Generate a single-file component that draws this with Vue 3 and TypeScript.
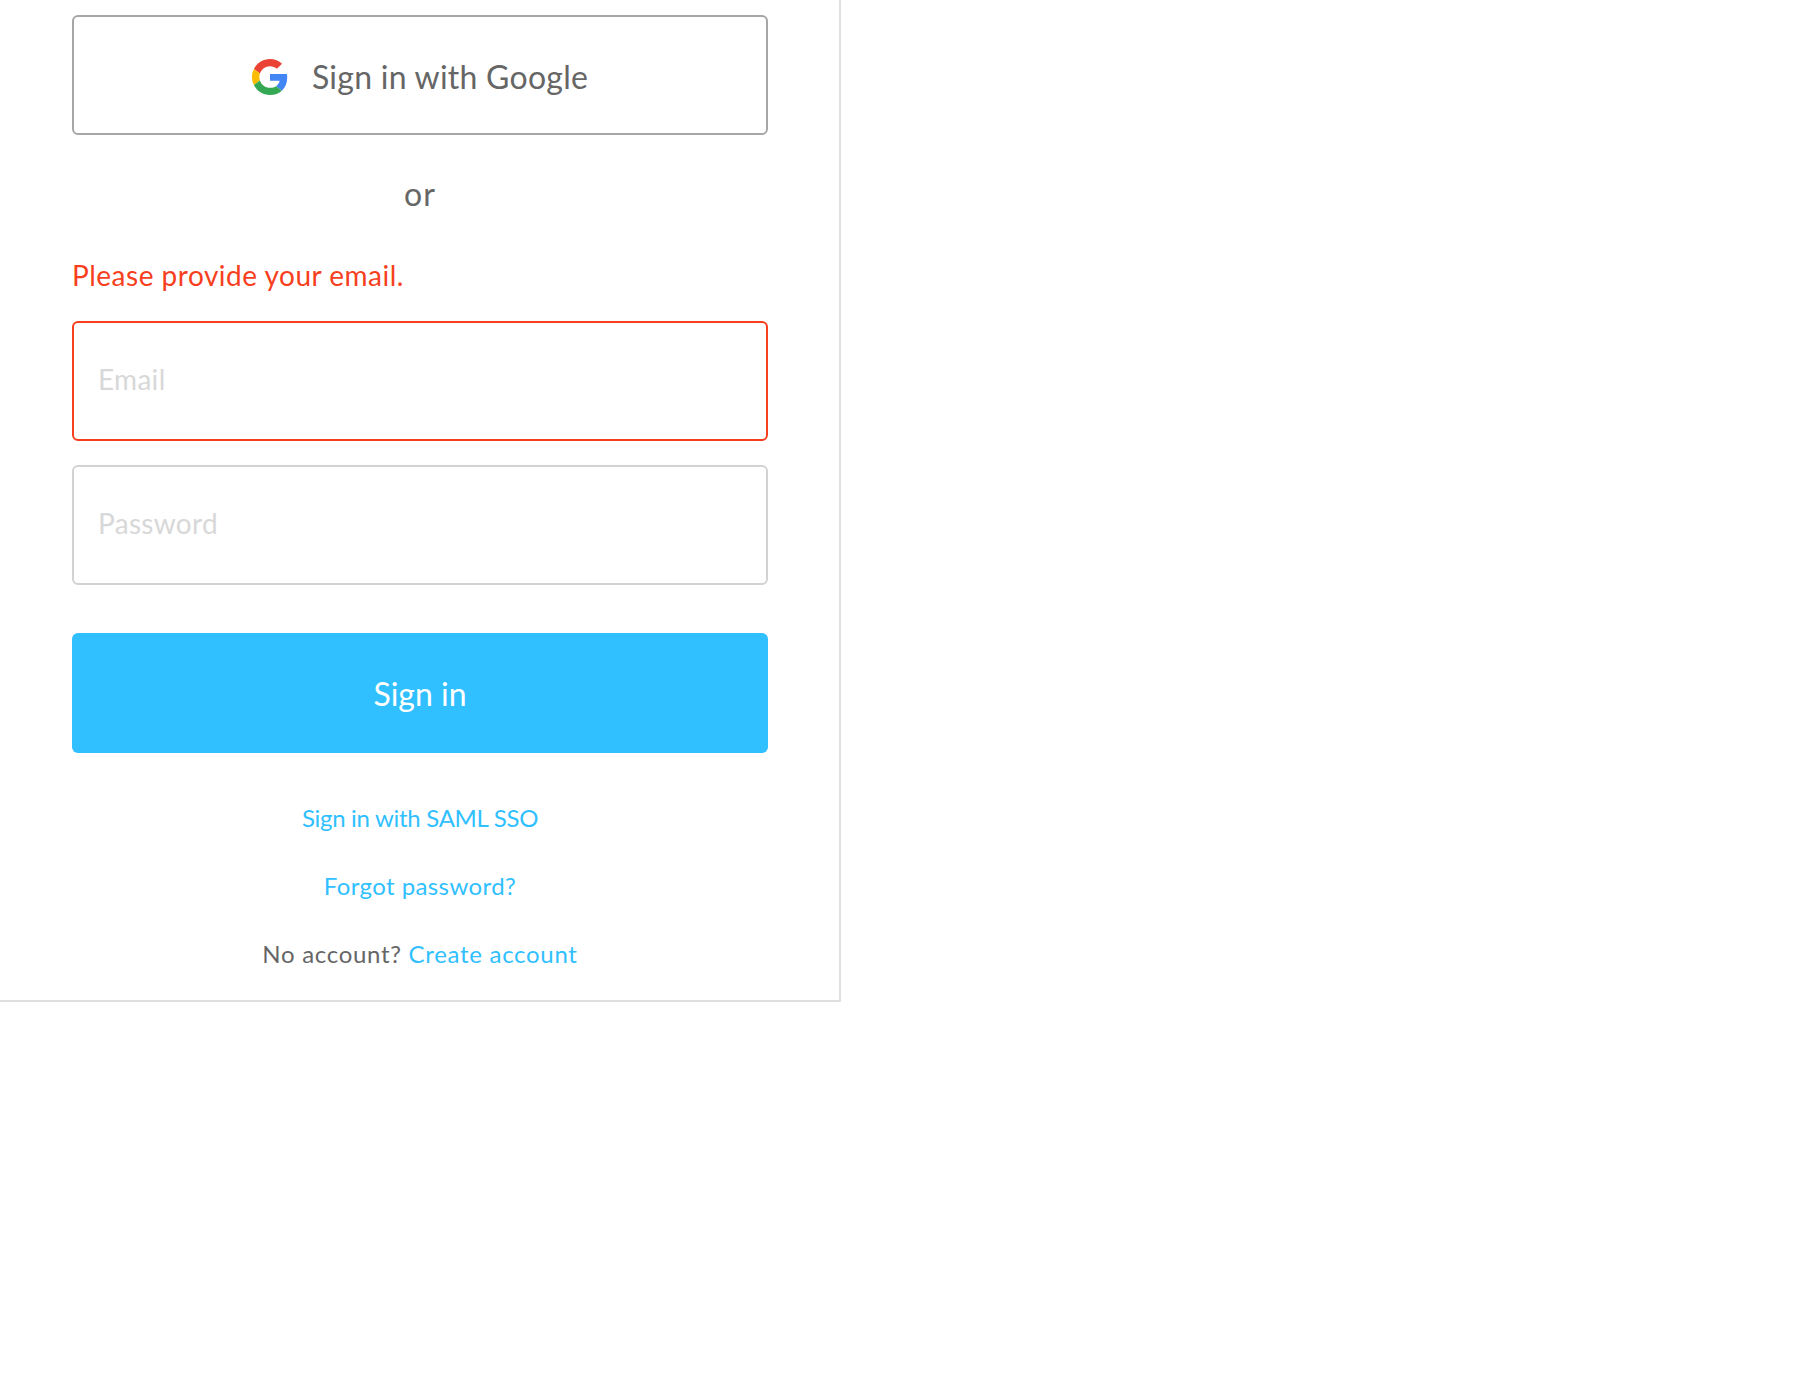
<script setup lang="ts">
const title: string = 'Sign in with Google'
</script>

<template>
  <main class="panel">
    <form class="form" @submit.prevent>
      <button type="button" class="google">
        <svg class="g" viewBox="0 0 48 48" width="36" height="36" aria-hidden="true">
          <path fill="#EA4335" d="M24 9.5c3.54 0 6.71 1.22 9.21 3.6l6.85-6.85C35.9 2.38 30.47 0 24 0 14.62 0 6.51 5.38 2.56 13.22l7.98 6.19C12.43 13.72 17.74 9.5 24 9.5z"/>
          <path fill="#4285F4" d="M46.98 24.55c0-1.57-.15-3.09-.38-4.55H24v9.02h12.94c-.58 2.96-2.26 5.48-4.78 7.18l7.73 6c4.51-4.18 7.09-10.36 7.09-17.65z"/>
          <path fill="#FBBC05" d="M10.53 28.59c-.48-1.45-.76-2.99-.76-4.59s.27-3.14.76-4.59l-7.98-6.19C.92 16.46 0 20.12 0 24c0 3.88.92 7.54 2.56 10.78l7.97-6.19z"/>
          <path fill="#34A853" d="M24 48c6.48 0 11.93-2.13 15.89-5.81l-7.73-6c-2.15 1.45-4.92 2.3-8.16 2.3-6.26 0-11.57-4.22-13.47-9.91l-7.98 6.19C6.51 42.62 14.62 48 24 48z"/>
        </svg>
        <span>{{ title }}</span>
      </button>
      <p class="or">or</p>
      <p class="error">Please provide your email.</p>
      <input class="field invalid" type="email" placeholder="Email" />
      <input class="field" type="password" placeholder="Password" />
      <button type="submit" class="submit">Sign in</button>
      <a class="link row first" href="#">Sign in with SAML SSO</a>
      <a class="link row forgot" href="#">Forgot password?</a>
      <p class="row account">No account? <a class="link" href="#">Create account</a></p>
    </form>
  </main>
</template>

<style>
html, body { background: #fff; }
</style>

<style scoped>
.panel {
  box-sizing: border-box;
  width: 841px;
  height: 1002px;
  padding: 15px 72px 0;
  border-right: 2px solid #e0e0e0;
  border-bottom: 2px solid #e0e0e0;
  background: #fff;
  font-family: Lato, "Open Sans", sans-serif;
  color: #666;
}
.form {
  display: flex;
  flex-direction: column;
  width: 696px;
}
.google, .submit, .field {
  box-sizing: border-box;
  width: 100%;
  height: 120px;
  border-radius: 6px;
  font-family: inherit;
  font-size: 32px;
}
.google {
  display: flex;
  align-items: center;
  justify-content: center;
  gap: 24px;
  padding: 2px 0 0;
  border: 2px solid #a6a6a6;
  background: #fff;
  color: #666;
  letter-spacing: 0.25px;
}
.g { flex: none; margin-top: 2px; }
.or {
  margin: 35px 0 0;
  height: 48px;
  line-height: 48px;
  text-align: center;
  font-size: 32px;
  letter-spacing: 1px;
}
.error {
  margin: 37px 0 0;
  height: 40px;
  line-height: 40px;
  font-size: 28px;
  letter-spacing: 0.5px;
  color: #f73f1e;
}
.field {
  display: block;
  margin-top: 24px;
  padding: 0 24px 4px;
  border: 2px solid #d2d2d2;
  background: #fff;
  font-size: 28px;
  letter-spacing: 0.3px;
  color: #666;
  outline: none;
}
.field.invalid { margin-top: 26px; border-color: #f73f1e; }
.field::placeholder { color: #d8d8d8; opacity: 1; }
.submit {
  margin-top: 48px;
  border: 0;
  background: #30c0ff;
  color: #fff;
  letter-spacing: 0;
}
.row {
  display: block;
  margin: 28px 0 0;
  height: 40px;
  line-height: 40px;
  text-align: center;
  font-size: 24px;
  letter-spacing: 0.7px;
}
.row.first { margin-top: 45px; letter-spacing: -0.3px; }
.row.forgot { letter-spacing: 0.4px; }
.link { color: #30c0ff; text-decoration: none; }
</style>
